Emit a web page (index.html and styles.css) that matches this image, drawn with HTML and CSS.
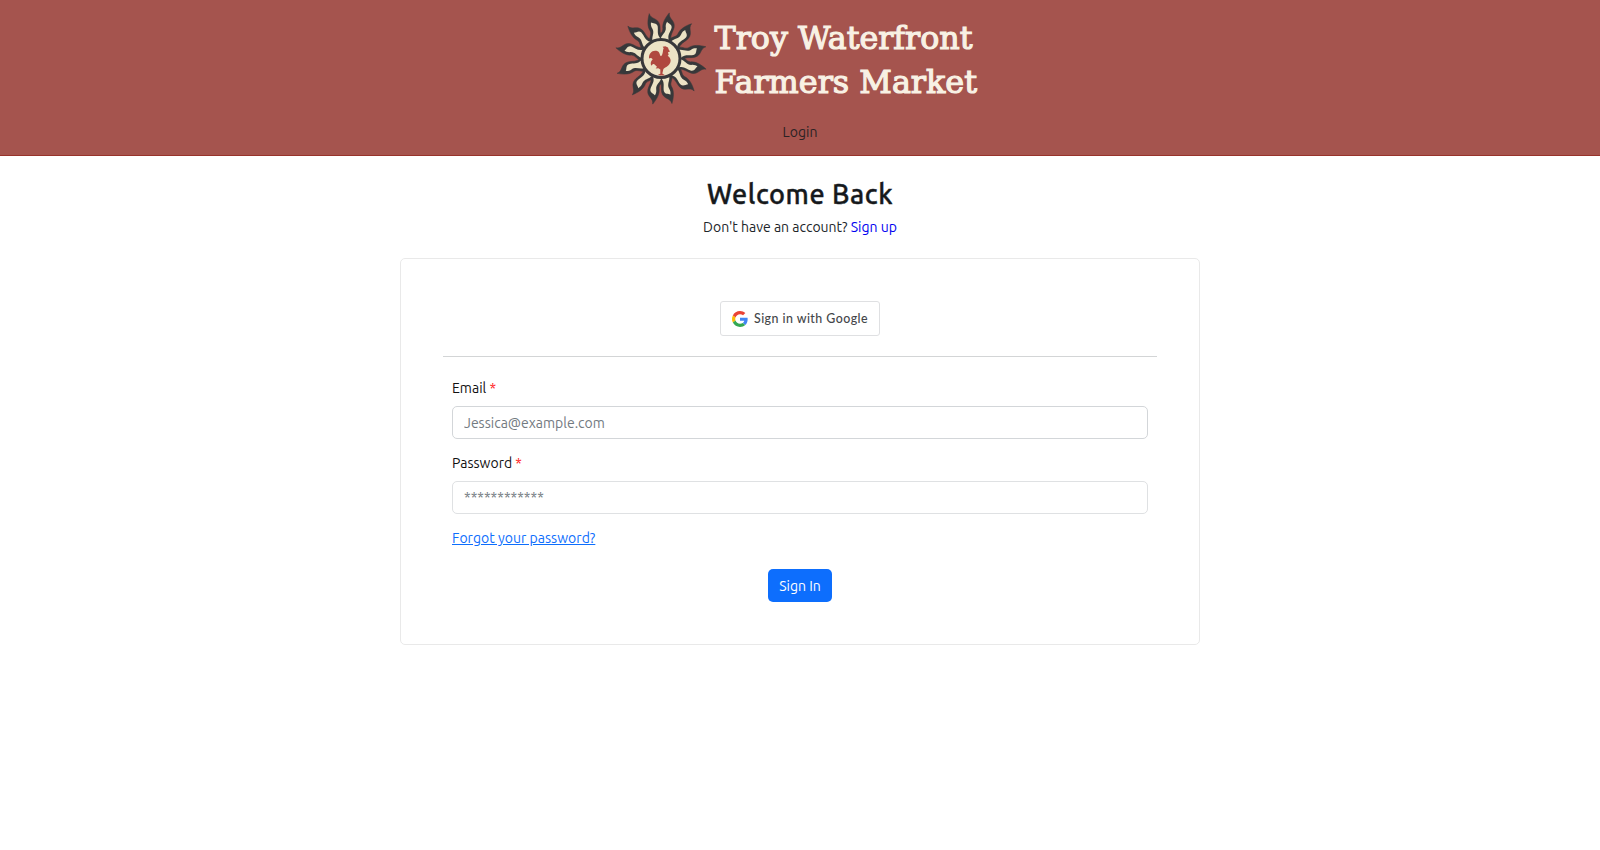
FILE: index.html
```html
<!DOCTYPE html>
<html lang="en">
<head>
<meta charset="utf-8">
<title>Troy Waterfront Farmers Market</title>
<link rel="stylesheet" href="styles.css">
</head>
<body>
<header class="header">
  <svg class="logo" width="390" height="105" viewBox="0 0 390 105">
    <defs>
      <path id="ray" d="M-20 -55 C-24 -68 -10 -76 -13 -88 C-19 -104 -13 -122 -4 -139 C-3 -120 18 -122 19 -100 C19 -84 10 -74 20 -55 Z"/>
      <path id="flame" d="M-13 -58 C-12 -72 -1 -79 -5 -93 C-8 -101 -7 -107 -5 -112 C0 -107 11 -108 12 -97 C11 -82 3 -73 12 -58 Z"/>
    </defs>
    <g transform="translate(56 53.5) scale(.33333)">
      <g fill="#38383a" stroke="#38383a" stroke-width="1.500">
        <use href="#ray" transform="rotate(-13)"/><use href="#ray" transform="rotate(12)"/><use href="#ray" transform="rotate(43)"/><use href="#ray" transform="rotate(77)"/><use href="#ray" transform="rotate(105)"/><use href="#ray" transform="rotate(136)"/><use href="#ray" transform="rotate(168)"/><use href="#ray" transform="rotate(192)"/><use href="#ray" transform="rotate(220)"/><use href="#ray" transform="rotate(253)"/><use href="#ray" transform="rotate(285)"/><use href="#ray" transform="rotate(316)"/>
        <circle r="63"/>
      </g>
      <g fill="#ece3c5">
        <use href="#flame" transform="rotate(-13)"/><use href="#flame" transform="rotate(12)"/><use href="#flame" transform="rotate(43)"/><use href="#flame" transform="rotate(77)"/><use href="#flame" transform="rotate(105)"/><use href="#flame" transform="rotate(136)"/><use href="#flame" transform="rotate(168)"/><use href="#flame" transform="rotate(192)"/><use href="#flame" transform="rotate(220)"/><use href="#flame" transform="rotate(253)"/><use href="#flame" transform="rotate(285)"/><use href="#flame" transform="rotate(316)"/>
      </g>
      <circle r="57" fill="#ece3c5" stroke="#38383a" stroke-width="9"/>
      <path fill="#b0483f" d="M-36 0 C-37 -17 -25 -27 -10 -22 C-2 -18 -5 -10 0 -7 C7 -12 5 -27 8 -31 L5 -35 L13 -37 L21 -33 L23 -27 L27 -21 L21 -19 L23 -11 L20 -8 C31 0 31 10 25 17 C19 25 9 28 7 32 L4 45 L12 50 L-2 51 L-9 49 L-2 46 L-2 33 L-8 29 L-16 30 L-12 25 C-20 18 -22 12 -29 22 C-33 12 -29 7 -25 2 C-28 -2 -32 -3 -36 0Z"/>
    </g>
    <g class="logo-text">
      <text x="109.500" y="44" textLength="258" lengthAdjust="spacingAndGlyphs">Troy Waterfront</text>
      <text x="109.500" y="87.500" textLength="262.500" lengthAdjust="spacingAndGlyphs">Farmers Market</text>
    </g>
  </svg>
  <nav><a class="nav-link">Login</a></nav>
</header>
<main class="main">
  <h1 class="title">Welcome Back</h1>
  <p class="subtitle">Don't have an account? <a class="signup">Sign up</a></p>
  <section class="card">
    <button class="google" type="button">
      <svg width="16" height="16" viewBox="0 0 48 48">
        <path fill="#ea4335" d="M24 9.5c3.540 0 6.710 1.220 9.210 3.600l6.850-6.850C35.900 2.380 30.470 0 24 0 14.620 0 6.510 5.380 2.560 13.220l7.980 6.190C12.430 13.720 17.740 9.500 24 9.500z"/>
        <path fill="#4285f4" d="M46.980 24.550c0-1.570-.15-3.090-.38-4.550H24v9.020h12.940c-.58 2.960-2.260 5.480-4.780 7.180l7.730 6c4.510-4.180 7.090-10.360 7.090-17.650z"/>
        <path fill="#fbbc05" d="M10.530 28.590c-.48-1.450-.76-2.990-.76-4.590s.27-3.140.76-4.590l-7.980-6.190C.92 16.460 0 20.120 0 24s.92 7.540 2.560 10.780z"/>
        <path fill="#34a853" d="M24 48c6.480 0 11.930-2.130 15.890-5.810l-7.730-6c-2.150 1.450-4.920 2.300-8.160 2.300-6.260 0-11.570-4.220-13.470-9.910l-7.980 6.190C6.510 42.620 14.620 48 24 48z"/>
      </svg>
      <span>Sign in with Google</span>
    </button>
    <form class="form">
      <label class="label" for="email"><span>Email</span> <span class="req">*</span></label>
      <input class="input" id="email" type="text" placeholder="Jessica@example.com">
      <label class="label" for="password"><span>Password</span> <span class="req">*</span></label>
      <input class="input input-password" id="password" type="password" placeholder="************">
      <a class="forgot">Forgot your password?</a>
      <button class="submit" type="button">Sign In</button>
    </form>
  </section>
</main>
</body>
</html>
```
FILE: styles.css
```css
* { box-sizing: border-box; }
body { margin: 0; background: #fff; color: #212529; font: 14px/22px "Ubuntu", "Noto Sans", sans-serif; }
.header { height: 156px; padding-top: 5px; display: flex; flex-direction: column; align-items: center; background: #a5544e; border-bottom: 1px solid #98332b; }
.logo { display: block; flex: none; }
.logo-text { font-family: "Rockwell", "DejaVu Serif", serif; font-size: 32.5px; fill: #f8f1e4; stroke: #f8f1e4; stroke-width: 1.2px; }
.nav-link { display: block; margin-top: 11px; color: #2b2224; }
.main { width: 800px; margin: 0 auto; display: flex; flex-direction: column; align-items: center; }
.title { margin: 21px 0 0; font-size: 27px; line-height: 34px; font-weight: 500; letter-spacing: .55px; -webkit-text-stroke: .4px #16191c; color: #16191c; }
.subtitle { margin: 5px 0 0; }
.signup { color: #0000f0; }
.card { width: 800px; height: 387px; margin-top: 20px; padding: 42px 42px 0; display: flex; flex-direction: column; align-items: center; border: 1px solid #e9e9e9; border-radius: 5px; }
.google { width: 160px; height: 35px; padding: 0; display: flex; align-items: center; justify-content: center; gap: 6px; background: #fff; border: 1px solid #dfe0e2; border-radius: 3px; color: #444649; font: 500 12.4px/16px "Lato", sans-serif; letter-spacing: .45px; white-space: nowrap; }
.form { width: 714px; margin-top: 20px; padding: 20px 9px 0; display: flex; flex-direction: column; border-top: 1px solid #d3d5d6; }
.label { height: 22px; margin-bottom: 7px; color: #111; }
.req { color: #f22; }
.input { width: 696px; height: 33px; margin: 0 0 13px; padding: 0 11px; border: 1px solid #d3d6d9; border-radius: 5px; background: #fff; font: inherit; }
.input-password { padding-bottom: 2px; border-color: #dfe1e3; }
.input::placeholder { color: #737a81; opacity: 1; }
.forgot { align-self: flex-start; color: #0d6efd; text-decoration: underline; letter-spacing: .03px; }
.submit { align-self: center; width: 64px; height: 33px; margin-top: 20px; padding: 0; border: 0; border-radius: 5px; background: #0d6efd; color: #fff; font: inherit; white-space: nowrap; }
```
